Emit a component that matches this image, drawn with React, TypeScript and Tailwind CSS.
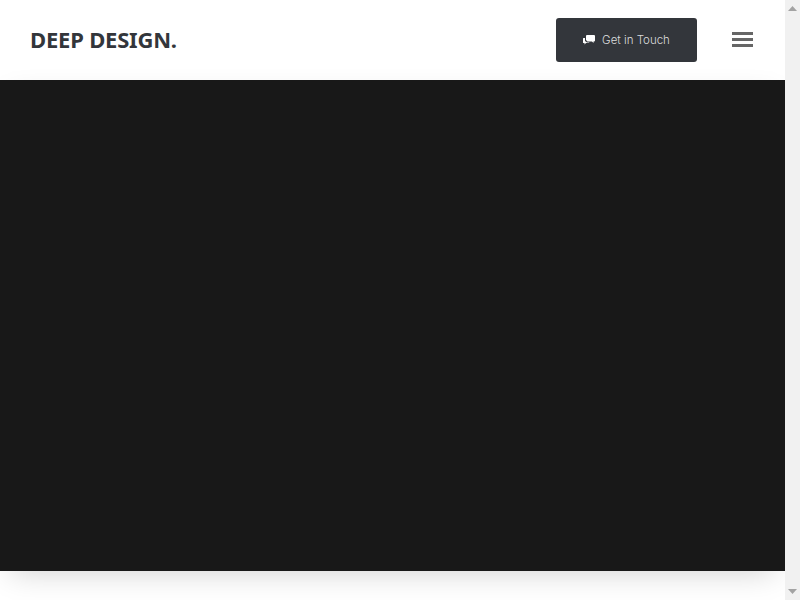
import React from "react";

export default function App() {
  return (
    <div className="h-screen flex overflow-hidden bg-white antialiased font-['Noto_Sans',sans-serif]">
      <div className="flex-1 min-w-0">
        <header className="h-20 pl-[30px] pr-8 flex items-center justify-between bg-white">
          <div className="-mt-[2px] text-[22px] font-bold text-[#33363b] tracking-[-0.2px]">DEEP DESIGN.</div>
          <div className="flex items-center">
            <button
              type="button"
              className="w-[141px] h-11 flex items-center justify-center gap-[7px] rounded-[3px] bg-[#33363b] text-[#dcdddd] text-[11.5px] font-light font-['Inter',sans-serif]"
            >
              <svg width="12" height="10" viewBox="0 0 12 10" fill="#ffffff" className="-mt-px">
                <path d="M4 0h7a1 1 0 0 1 1 1v4.5a1 1 0 0 1-1 1h-.5V8L9 6.5H4.5L3 5V1a1 1 0 0 1 1-1z" />
                <path d="M0.5 3H2v3l2 1.5h2.5l-.6.6H3L1.5 9.6V8.1H.5a.5.5 0 0 1-.5-.5V3.5a.5.5 0 0 1 .5-.5z" />
              </svg>
              <span className="pt-px">Get in Touch</span>
            </button>
            <div className="ml-[35px] -mt-px w-[21px] flex flex-col gap-[3px]">
              <span className="h-[3px] bg-[#666666]" />
              <span className="h-[3px] bg-[#666666]" />
              <span className="h-[3px] bg-[#666666]" />
            </div>
          </div>
        </header>
        <main className="h-[491px] bg-[#181818] shadow-[0_10px_30px_-10px_rgba(0,0,0,0.2)]" />
      </div>
      <aside className="w-[15px] shrink-0 bg-[#f1f1f1] flex flex-col items-center justify-between py-[6px]">
        <svg width="9" height="5" viewBox="0 0 9 5" fill="#a3a3a3">
          <path d="M4.5 0L9 5H0z" />
        </svg>
        <svg width="9" height="5" viewBox="0 0 9 5" fill="#a3a3a3">
          <path d="M0 0h9L4.5 5z" />
        </svg>
      </aside>
    </div>
  );
}
